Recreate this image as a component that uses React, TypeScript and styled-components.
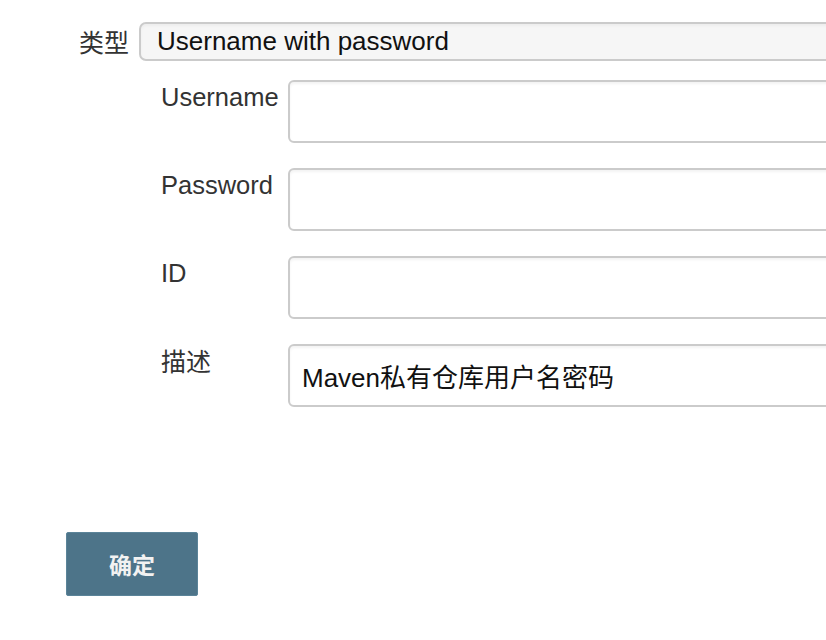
import React from "react";
import styled, { createGlobalStyle } from "styled-components";

const GlobalStyle = createGlobalStyle`
  html, body {
    margin: 0;
    padding: 0;
    background: #ffffff;
    overflow: hidden;
  }
  body {
    font-family: "Liberation Sans", Arial, "Noto Sans CJK SC", sans-serif;
  }
`;

const Page = styled.div`
  width: 826px;
  height: 640px;
  overflow: hidden;
  padding: 22px 0 0 66px;
  box-sizing: border-box;
  display: flex;
  flex-direction: column;
`;

const TypeRow = styled.div`
  display: flex;
  align-items: center;
  margin-left: 13px;
  gap: 10px;
`;

const CjkLabel = styled.span`
  font-family: "Noto Sans CJK SC", sans-serif;
  font-size: 25px;
  color: #333;
  line-height: 39px;
  white-space: nowrap;
`;

const Select = styled.div`
  width: 760px;
  flex: none;
  height: 39px;
  box-sizing: border-box;
  border: 2px solid #cbcbcb;
  border-radius: 7px;
  background: #f6f6f6;
  box-shadow: inset 0 2px 3px rgba(0, 0, 0, 0.04);
  display: flex;
  align-items: center;
  padding-left: 16px;
  font-size: 26px;
  color: #111;
  white-space: nowrap;
`;

const Fields = styled.div`
  display: grid;
  grid-template-columns: 127px 600px;
  row-gap: 25px;
  margin: 19px 0 0 95px;
`;

const Label = styled.div<{ $cjk?: boolean }>`
  font-family: ${(p) =>
    p.$cjk
      ? `"Noto Sans CJK SC", sans-serif`
      : `"Liberation Sans", Arial, sans-serif`};
  font-size: ${(p) => (p.$cjk ? "25px" : "25.5px")};
  color: #333;
  padding-top: ${(p) => (p.$cjk ? "1px" : "2px")};
  line-height: 30px;
`;

const Input = styled.div`
  height: 63px;
  box-sizing: border-box;
  border: 2px solid #cbcbcb;
  border-radius: 6px;
  background: #fff;
  box-shadow: inset 0 2px 3px rgba(0, 0, 0, 0.05);
  display: flex;
  align-items: center;
  padding-left: 12px;
  font-family: "Liberation Sans", Arial, "Noto Sans CJK SC", sans-serif;
  font-size: 26px;
  color: #111;
  white-space: nowrap;
`;

const Button = styled.button`
  margin-top: 125px;
  width: 132px;
  height: 64px;
  border: 1px solid #5b8499;
  border-radius: 2px;
  background: #4d7489;
  color: #f2f2f2;
  font-family: "Noto Sans CJK SC", sans-serif;
  font-weight: 700;
  font-size: 23px;
  padding: 0;
`;

const fields: { label: string; cjk?: boolean; value?: string }[] = [
  { label: "Username" },
  { label: "Password" },
  { label: "ID" },
  { label: "描述", cjk: true, value: "Maven私有仓库用户名密码" },
];

export default function App() {
  return (
    <>
      <GlobalStyle />
      <Page>
        <TypeRow>
          <CjkLabel>类型</CjkLabel>
          <Select>Username with password</Select>
        </TypeRow>
        <Fields>
          {fields.map((f) => (
            <React.Fragment key={f.label}>
              <Label $cjk={f.cjk}>{f.label}</Label>
              <Input>{f.value ?? ""}</Input>
            </React.Fragment>
          ))}
        </Fields>
        <div>
          <Button>确定</Button>
        </div>
      </Page>
    </>
  );
}
